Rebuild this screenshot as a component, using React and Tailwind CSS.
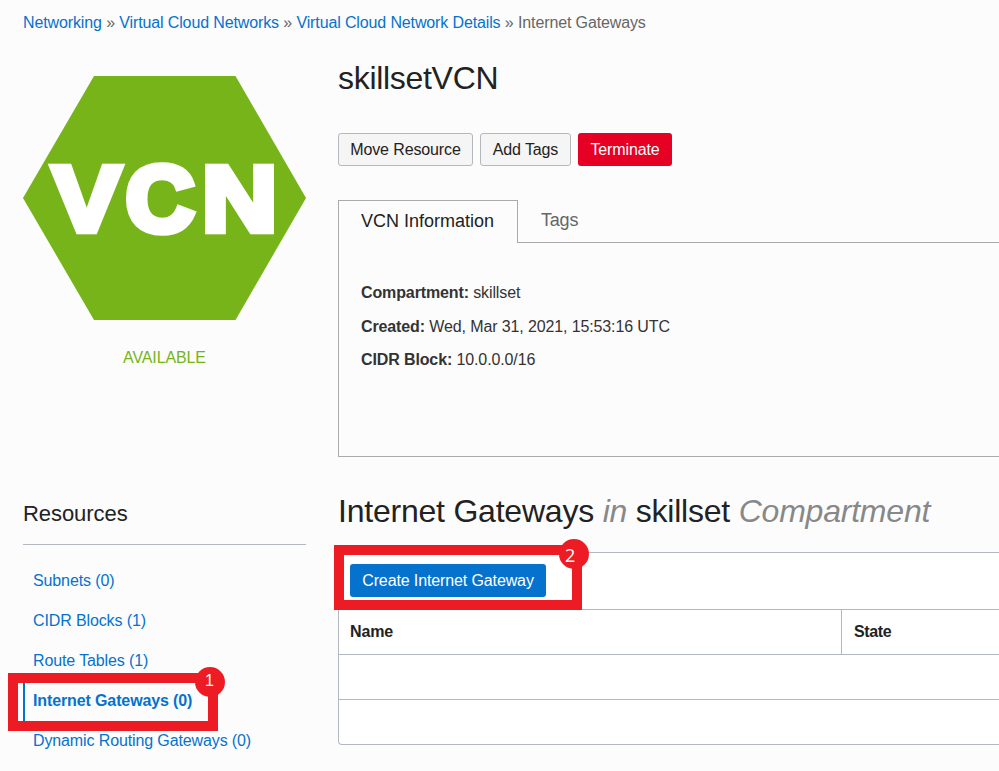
const links = ["Networking", "Virtual Cloud Networks", "Virtual Cloud Network Details"];

const resources = [
  { label: "Subnets (0)" },
  { label: "CIDR Blocks (1)" },
  { label: "Route Tables (1)" },
  { label: "Internet Gateways (0)", active: true },
  { label: "Dynamic Routing Gateways (0)" },
];

const details = [
  ["Compartment:", "skillset"],
  ["Created:", "Wed, Mar 31, 2021, 15:53:16 UTC"],
  ["CIDR Block:", "10.0.0.0/16"],
];

function VcnLogo() {
  return (
    <svg width="283" height="245" viewBox="0 0 283 245" className="block">
      <polygon points="71,0 212.5,0 283,122 212.5,244 71,244 0,122" fill="#77b41a" />
      <g
        fill="#fff"
        stroke="#fff"
        strokeWidth="6.6"
        strokeMiterlimit="2.2"
        fontFamily="'Liberation Sans', Arial, sans-serif"
        fontWeight="700"
        fontSize="93.5"
        letterSpacing="0"
        textAnchor="middle"
      >
        <text transform="translate(63.5 154.9) scale(1.1 1)">V</text>
        <text transform="translate(137 154.9) scale(1.02 1)" strokeWidth="7.6" fontSize="92.5">C</text>
        <text transform="translate(216.5 154.9) scale(1.12 1)">N</text>
      </g>
    </svg>
  );
}

function Callout({ n, frame, badge }) {
  return (
    <>
      <div className={`pointer-events-none absolute border-[10px] border-[#ed1c24] ${frame}`} />
      <div className={`pointer-events-none absolute size-[30px] rounded-full bg-[#ed1c24] text-white ${badge}`}>
        {n}
      </div>
    </>
  );
}

export default function App() {
  return (
    <div className="h-[771px] w-[999px] overflow-hidden bg-[#fcfcfc] font-['Liberation_Sans',Arial,sans-serif] text-base tracking-[-0.12px] text-[#222]">
      <nav className="flex h-[45px] gap-[4.4px] whitespace-nowrap pl-[23px] pt-[11px] leading-6 tracking-[-0.13px] text-[#666]">
        {links.map((l) => (
          <span key={l} className="flex gap-[4.4px]">
            <a className="text-[#0572ce]">{l}</a>
            <span>»</span>
          </span>
        ))}
        <span>Internet Gateways</span>
      </nav>

      <div className="flex">
        <aside className="ml-[23px] w-[283px] shrink-0 pt-[31px]">
          <VcnLogo />
          <div className="mt-[25px] text-center leading-6 text-[#77b41a]">AVAILABLE</div>
          <h2 className="mt-[129px] h-[46px] border-b border-[#b3b8c0] text-[22px] leading-[30px] tracking-[-0.06px]">Resources</h2>
          <ul className="relative mt-4">
            {resources.map((r) => (
              <li
                key={r.label}
                className={
                  r.active
                    ? "flex h-10 items-center whitespace-nowrap border-l-[2px] border-[#0572ce] pl-2 font-bold text-[#0572ce]"
                    : "flex h-10 items-center whitespace-nowrap pl-[10px] text-[#0572ce]"
                }
              >
                {r.label}
              </li>
            ))}
            <Callout
              n="1"
              frame="left-[-15px] top-[112px] h-[58px] w-[210px]"
              badge="left-[172px] top-[106px] pl-[10px] pt-[2px]"
            />
          </ul>
        </aside>

        <main className="ml-8 min-w-0 flex-1">
          <h1 className="h-[88px] pt-[14px] text-[32px] leading-[38px] tracking-[-0.3px]">skillsetVCN</h1>

          <div className="flex h-[33px] gap-[7px]">
            <button className="w-[135px] rounded-[3px] border border-[#b3b8c0] bg-[#f5f5f5]">Move Resource</button>
            <button className="w-[91px] rounded-[3px] border border-[#b3b8c0] bg-[#f5f5f5]">Add Tags</button>
            <button className="w-[94px] rounded-[3px] bg-[#e60023] text-white">Terminate</button>
          </div>

          <div className="mt-[34px] flex h-[43px] text-lg tracking-normal">
            <div className="w-[180px] border border-b-0 border-[#aaa] pl-[22px] leading-[41px]">VCN Information</div>
            <div className="flex-1 border-b border-[#aaa] pl-[23px] leading-[40px] tracking-[-0.2px] text-[#666]">Tags</div>
          </div>
          <div className="h-[214px] border-b border-l border-[#aaa] pl-[22px] pt-[33px]">
            {details.map(([k, v]) => (
              <div key={k} className="h-[33.5px] leading-[33.5px]">
                <b className="text-[#333]">{k}</b> <span className="text-[#333]">{v}</span>
              </div>
            ))}
          </div>

          <h2 className="h-[95px] whitespace-nowrap pt-[35px] text-[32px] leading-[38px] tracking-[-0.22px]">
            Internet Gateways <i className="text-[#888]">in</i> skillset <i className="text-[#888]">Compartment</i>
          </h2>

          <section className="relative h-[193px] rounded-bl-[4px] border-y border-l border-[#b3b8c0] bg-white">
            <div className="h-14 pl-[11px] pt-[11px]">
              <button className="h-[33px] w-[196px] rounded-[3px] bg-[#0572ce] text-white">
                Create Internet Gateway
              </button>
            </div>
            <div className="flex h-[46px] border-y border-[#b3b8c0] font-bold leading-[43px]">
              <div className="w-[503px] border-r border-[#b3b8c0] pl-[11px]">Name</div>
              <div className="pl-3 tracking-[-0.4px]">State</div>
            </div>
            <div className="h-[45px] border-b border-[#b3b8c0]" />
            <Callout
              n="2"
              frame="left-[-5px] top-[-8px] h-[65px] w-[248px]"
              badge="left-[220px] top-[-14px] pl-[6px] pt-[4px] font-['Open_Sans',sans-serif] text-lg leading-6"
            />
          </section>
        </main>
      </div>
    </div>
  );
}
